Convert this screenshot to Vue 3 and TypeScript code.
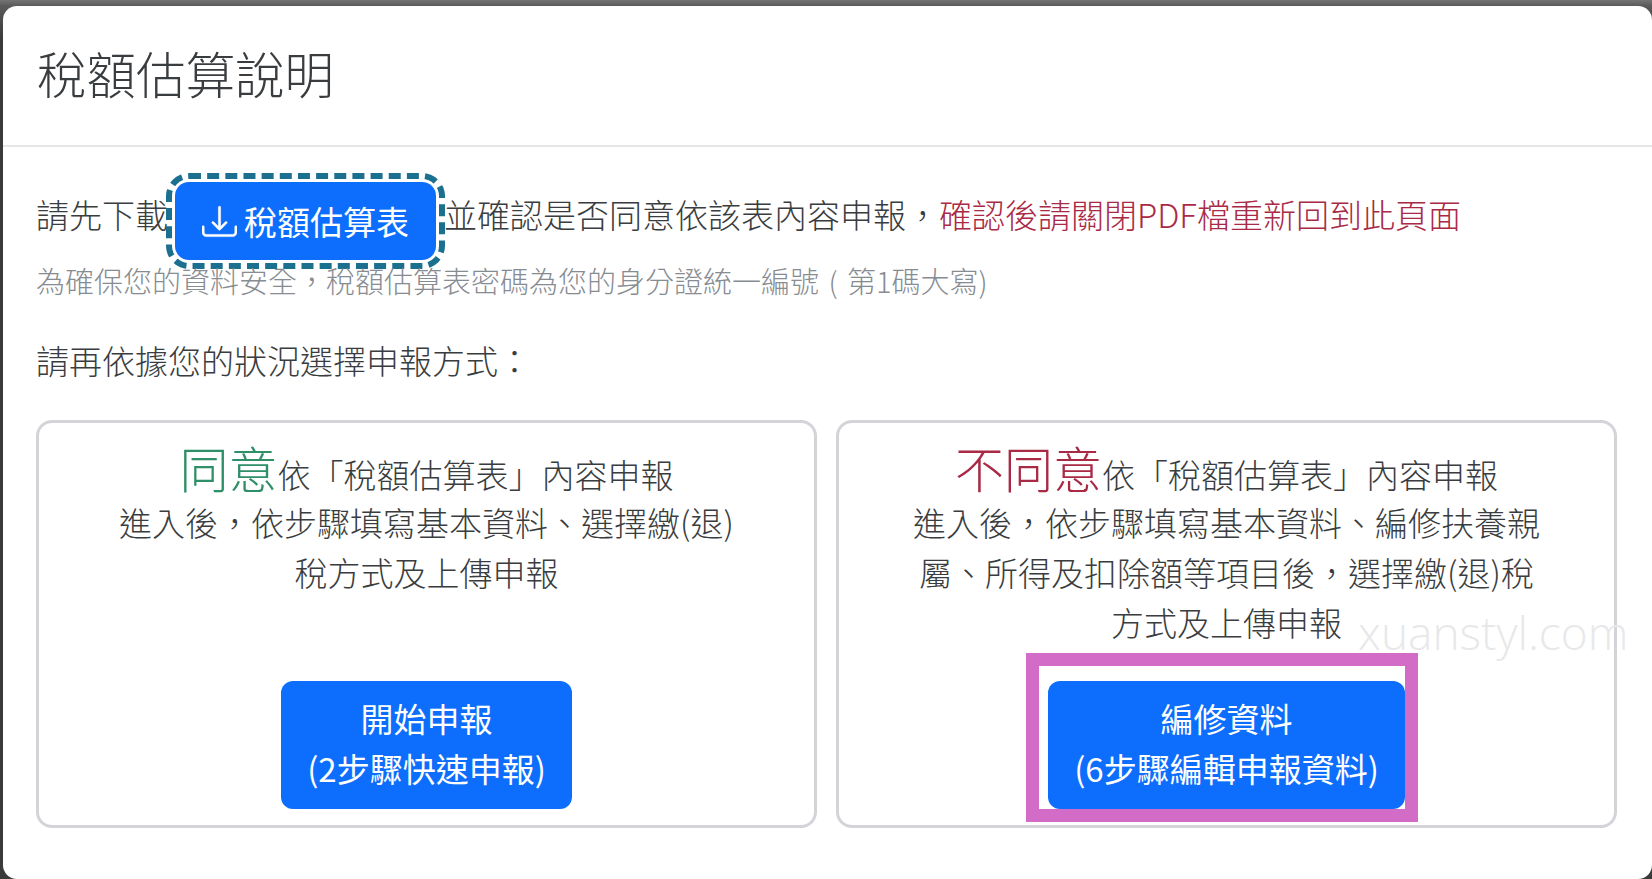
<script setup lang="ts">
interface Choice {
  lead: string
  tone: string
  desc: string
  action: string
  steps: string
  marked: boolean
}

const choices: Choice[] = [
  {
    lead: '同意',
    tone: 'agree',
    desc: '進入後，依步驟填寫基本資料、選擇繳(退)稅方式及上傳申報',
    action: '開始申報',
    steps: '(2步驟快速申報)',
    marked: false,
  },
  {
    lead: '不同意',
    tone: 'disagree',
    desc: '進入後，依步驟填寫基本資料、編修扶養親屬、所得及扣除額等項目後，選擇繳(退)稅方式及上傳申報',
    action: '編修資料',
    steps: '(6步驟編輯申報資料)',
    marked: true,
  },
]
</script>

<template>
  <div class="backdrop" lang="zh-TW">
    <section class="modal">
      <header class="modal-header">
        <h1 class="modal-title">稅額估算說明</h1>
      </header>
      <div class="modal-body">
        <div class="first-line">
          <span class="line-text">請先下載</span>
          <button class="btn download" type="button">
            <svg class="icon" viewBox="0 0 16 16" fill="currentColor" stroke="currentColor" stroke-width="0.25" aria-hidden="true">
              <path d="M.5 9.9a.5.5 0 0 1 .5.5v2.5a1 1 0 0 0 1 1h12a1 1 0 0 0 1-1v-2.5a.5.5 0 0 1 1 0v2.5a2 2 0 0 1-2 2H2a2 2 0 0 1-2-2v-2.5a.5.5 0 0 1 .5-.5z" />
              <path d="M7.646 11.854a.5.5 0 0 0 .708 0l3-3a.5.5 0 0 0-.708-.708L8.5 10.293V1.5a.5.5 0 0 0-1 0v8.793L5.354 8.146a.5.5 0 1 0-.708.708l3 3z" />
            </svg>
            <span>稅額估算表</span>
          </button>
          <span class="line-text">並確認是否同意依該表內容申報，<span class="warn">確認後請關閉PDF檔重新回到此頁面</span></span>
        </div>
        <p class="hint">為確保您的資料安全，稅額估算表密碼為您的身分證統一編號 ( 第1碼大寫)</p>
        <p class="prompt">請再依據您的狀況選擇申報方式：</p>
        <div class="cards">
          <article v-for="c in choices" :key="c.lead" class="card">
            <p class="card-head"><span class="lead" :class="c.tone">{{ c.lead }}</span>依「稅額估算表」內容申報</p>
            <p class="card-desc">{{ c.desc }}</p>
            <div class="action" :class="{ marked: c.marked }">
              <button class="btn go" type="button">{{ c.action }}<br />{{ c.steps }}</button>
            </div>
          </article>
        </div>
      </div>
      <span class="watermark">xuanstyl.com</span>
    </section>
  </div>
</template>

<style scoped>
.backdrop {
  width: 1652px;
  height: 879px;
  overflow: hidden;
  background: linear-gradient(#747474, #5a5a5a 6px, #3a3a3a 40px, #3a3a3a);
  padding: 6px 0 0 3px;
  box-sizing: border-box;
  font-family: "Noto Sans CJK TC", "Noto Sans", sans-serif;
  color: #3a3d40;
}
.modal {
  position: relative;
  height: 873px;
  background: #fff;
  border-radius: 14px;
  box-sizing: border-box;
}
.modal-header {
  height: 141px;
  box-sizing: border-box;
  border-bottom: 2px solid #e4e6e8;
  padding: 37px 0 0 34px;
}
.modal-title {
  margin: 0;
  font-size: 49.5px;
  font-weight: 300;
  line-height: 60px;
}
.modal-body {
  padding: 0 33px;
}
.first-line {
  display: flex;
  align-items: flex-start;
  padding-top: 35px;
  font-size: 33px;
  font-weight: 300;
  line-height: 50px;
  white-space: nowrap;
}
.line-text {
  margin-top: 7px;
}
.btn {
  border: 0;
  background: #0d6efd;
  color: #fff;
  font-family: inherit;
  font-weight: 400;
  font-size: 33px;
  line-height: 50px;
  cursor: pointer;
}
.download {
  display: flex;
  align-items: center;
  justify-content: center;
  gap: 7px;
  width: 261px;
  height: 78px;
  margin: 0 8px 0 7px;
  border-radius: 14px;
  outline: 6px dashed #1b6f8f;
  outline-offset: 3px;
}
.icon {
  width: 35px;
  height: 35px;
}
.warn {
  color: #a92a45;
}
.hint {
  margin: 0;
  font-size: 29px;
  font-weight: 300;
  line-height: 40px;
  word-spacing: 3px;
  color: #878c92;
}
.prompt {
  margin: 35px 0 0;
  font-size: 33px;
  font-weight: 300;
  line-height: 50px;
}
.cards {
  display: grid;
  grid-template-columns: 781px 781px;
  gap: 19px;
  margin-top: 35px;
}
.card {
  display: flex;
  flex-direction: column;
  align-items: center;
  height: 408px;
  box-sizing: border-box;
  padding: 19px 0 16px;
  border: 3px solid #d2d4d8;
  border-radius: 16px;
  text-align: center;
  font-size: 33px;
  font-weight: 300;
  line-height: 50px;
}
.card-head {
  margin: 0;
  height: 55px;
}
.lead {
  font-size: 49px;
}
.agree {
  color: #2f8f68;
}
.disagree {
  color: #a92a45;
}
.card-desc {
  margin: 0;
  width: 640px;
}
.action {
  margin-top: auto;
  position: relative;
}
.marked::after {
  content: "";
  position: absolute;
  left: -22px;
  right: -13px;
  top: -28px;
  bottom: -13px;
  border: 13px solid #d36cc6;
  pointer-events: none;
}
.go {
  display: block;
  height: 128px;
  padding: 0 26px 5px;
  border-radius: 12px;
}
.watermark {
  position: absolute;
  left: 1355px;
  top: 601px;
  font-family: "Open Sans", sans-serif;
  font-size: 46px;
  font-weight: 300;
  line-height: 50px;
  color: #e8e8ea;
  pointer-events: none;
}
</style>
